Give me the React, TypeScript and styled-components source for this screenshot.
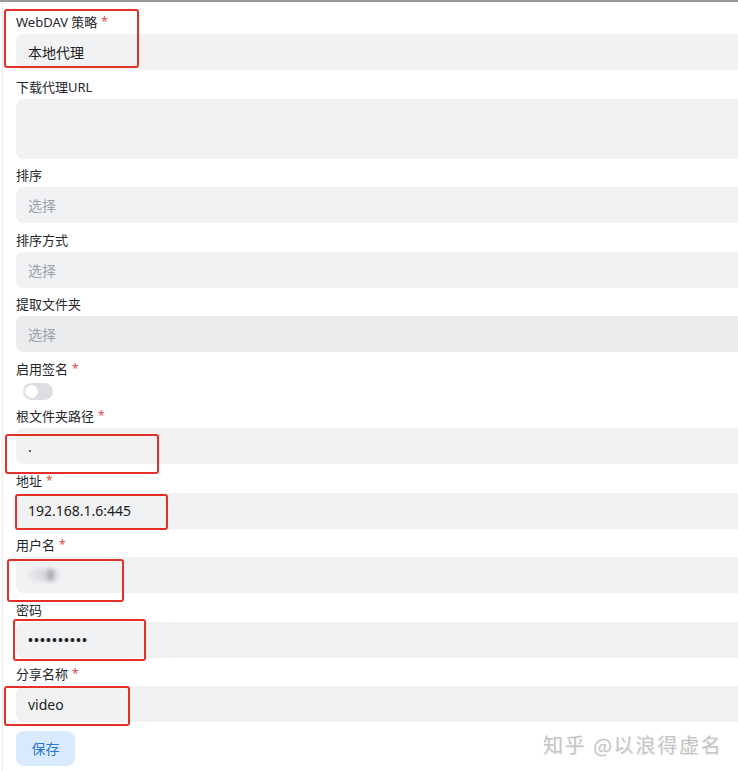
import React from "react";
import styled, { createGlobalStyle } from "styled-components";

const Global = createGlobalStyle`
  html, body { margin: 0; padding: 0; background: #fff; overflow: hidden; }
  body { font-family: "Noto Sans", "Noto Sans CJK SC", sans-serif; }
`;

const Page = styled.div`
  position: relative;
  width: 738px;
  height: 771px;
  overflow: hidden;
  border-top: 2px solid #9a9a9a;
  box-sizing: border-box;
  background: #fff;
  &::before {
    content: "";
    position: absolute;
    left: 2px;
    top: 0;
    bottom: 0;
    width: 1px;
    background: #ececec;
  }
`;

const Form = styled.div`
  display: flex;
  flex-direction: column;
  gap: 6.5px;
  padding: 10px 0 0 16px;
  width: 740px;
`;

const Field = styled.div`
  display: flex;
  flex-direction: column;
  gap: 2px;
`;

const Label = styled.div`
  font-family: "Noto Sans", "Noto Sans CJK SC", sans-serif;
  font-size: 13px;
  line-height: 20px;
  height: 20px;
  color: #24272b;
  display: flex;
  align-items: center;
`;

const Star = styled.span`
  color: #e5484d;
  margin-left: 4px;
  font-size: 12px;
`;

const Input = styled.div<{ $disabled?: boolean; $tall?: boolean }>`
  height: ${(p) => (p.$tall ? "60px" : "36px")};
  border-radius: 7px;
  background: ${(p) => (p.$disabled ? "#ebecee" : "#f1f2f4")};
  padding: 0 12px;
  display: flex;
  align-items: center;
  font-size: 14px;
  color: #1c1e21;
  box-sizing: border-box;
`;

const Placeholder = styled.span`
  color: #9ea3aa;
`;

const Dots = styled.span`
  letter-spacing: 1.1px;
  font-size: 13px;
  color: #1c1e21;
  font-weight: 700;
`;

const Blur = styled.span`
  display: inline-block;
  width: 32px;
  height: 12px;
  margin-left: 0;
  background: linear-gradient(90deg, #e9eaec, #d3d5d8 55%, #9a9c9f 72%, #d8dadd 85%, #eceef0);
  border-radius: 6px;
  filter: blur(2px);
`;

const Switch = styled.div`
  width: 30px;
  height: 17px;
  border-radius: 9px;
  background: #dcdee2;
  margin: 2px 0 0 7px;
  display: flex;
  align-items: center;
  padding: 2px;
  box-sizing: border-box;
  &::after {
    content: "";
    width: 13px;
    height: 13px;
    border-radius: 50%;
    background: #fff;
  }
`;

const SaveButton = styled.button`
  align-self: flex-start;
  margin-top: 2px;
  width: 59px;
  height: 35px;
  border: none;
  border-radius: 8px;
  background: #d8eafb;
  color: #2b77c8;
  font-family: "Noto Sans CJK SC", sans-serif;
  font-size: 14px;
  padding: 0;
`;

const Mark = styled.div<{ $x: number; $y: number; $w: number; $h: number }>`
  position: absolute;
  left: ${(p) => p.$x}px;
  top: ${(p) => p.$y}px;
  width: ${(p) => p.$w}px;
  height: ${(p) => p.$h}px;
  border: 2px solid #e3302b;
  border-radius: 3px;
  box-sizing: border-box;
  pointer-events: none;
`;

const Watermark = styled.div`
  position: absolute;
  left: 543px;
  top: 728px;
  font-family: "Noto Sans CJK SC", sans-serif;
  font-size: 20px;
  letter-spacing: 1.8px;
  color: #c4c4c4;
  text-shadow: 1px 1px 0 #f4f4f4;
  white-space: nowrap;
`;

type F = {
  label: string;
  req?: boolean;
  value?: React.ReactNode;
  placeholder?: string;
  disabled?: boolean;
  tall?: boolean;
};

const fields: F[] = [
  { label: "WebDAV 策略", req: true, value: "本地代理" },
  { label: "下载代理URL", tall: true },
  { label: "排序", placeholder: "选择" },
  { label: "排序方式", placeholder: "选择" },
  { label: "提取文件夹", placeholder: "选择", disabled: true },
];

const fields2: F[] = [
  { label: "根文件夹路径", req: true, value: "." },
  { label: "地址", req: true, value: "192.168.1.6:445" },
  { label: "用户名", req: true, value: <Blur /> },
  { label: "密码", value: <Dots>••••••••••</Dots> },
  { label: "分享名称", req: true, value: "video" },
];

const renderField = (f: F) => (
  <Field key={f.label}>
    <Label>
      {f.label}
      {f.req && <Star>*</Star>}
    </Label>
    <Input $disabled={f.disabled} $tall={f.tall}>
      {f.value}
      {f.placeholder && <Placeholder>{f.placeholder}</Placeholder>}
    </Input>
  </Field>
);

export default function App() {
  return (
    <>
      <Global />
      <Page>
        <Form>
          {fields.map(renderField)}
          <Field>
            <Label>
              启用签名<Star>*</Star>
            </Label>
            <Switch />
          </Field>
          {fields2.map(renderField)}
          <SaveButton>保存</SaveButton>
        </Form>
        <Mark $x={4} $y={7} $w={135} $h={59} />
        <Mark $x={5} $y={432} $w={154} $h={40} />
        <Mark $x={15} $y={492} $w={153} $h={36} />
        <Mark $x={7} $y={557} $w={117} $h={43} />
        <Mark $x={13} $y={617} $w={133} $h={42} />
        <Mark $x={4} $y={684} $w={126} $h={40} />
        <Watermark>知乎 @以浪得虚名</Watermark>
      </Page>
    </>
  );
}
